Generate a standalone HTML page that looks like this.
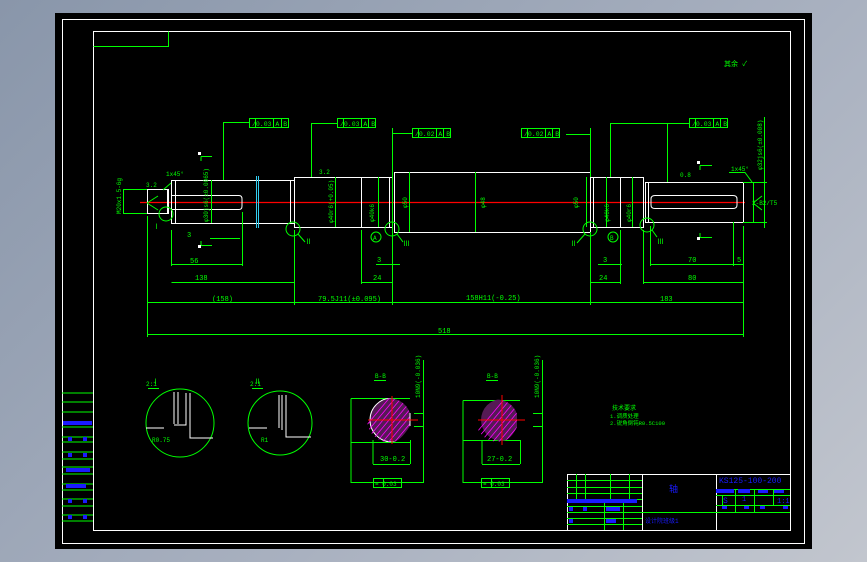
<!DOCTYPE html>
<html><head><meta charset="utf-8"><style>
html,body{margin:0;padding:0;}
body{width:867px;height:562px;background:linear-gradient(135deg,#8996aa 0%,#a9b1c0 60%,#c2c6ce 100%);overflow:hidden;position:relative;}
svg{position:absolute;left:0;top:0;}
text{font-family:"Liberation Mono","Noto Sans CJK SC",monospace;}
</style></head><body>
<svg width="867" height="562" viewBox="0 0 867 562" xmlns="http://www.w3.org/2000/svg">
<rect x="55" y="13" width="757" height="536" fill="#000"/>
<g fill="none" stroke="#fff" stroke-width="1">
<rect x="62.5" y="19.5" width="742" height="524"/>
<rect x="93.5" y="31.5" width="697" height="499"/>
</g>
<g fill="none" stroke="#00ff00" stroke-width="1">
<polyline points="93.5,46.5 168.5,46.5 168.5,31.5"/>
<!-- left strip lines -->
<path d="M62 393H93M62 402H93M62 412H93M62 427H93M62 437H93M62 442H93M62 452H93M62 459H93M62 467H93M62 474H93M62 484H93M62 490H93M62 499H93M62 506H93M62 515H93M62 521H93"/>
</g>
<g fill="#1a1aff">
<rect x="63" y="421" width="29" height="4"/><rect x="68" y="437" width="4" height="4"/><rect x="83" y="437" width="4" height="4"/>
<rect x="68" y="453" width="4" height="4"/><rect x="83" y="453" width="4" height="4"/>
<rect x="66" y="468" width="24" height="4"/><rect x="66" y="484" width="20" height="4"/>
<rect x="68" y="499" width="4" height="4"/><rect x="83" y="499" width="4" height="4"/>
<rect x="68" y="515" width="4" height="4"/><rect x="83" y="515" width="4" height="4"/>
</g>
<!-- centerline -->
<line x1="140" y1="202.5" x2="745" y2="202.5" stroke="#ff0000" stroke-width="1.2"/>
<!-- shaft -->
<g fill="none" stroke="#fff" stroke-width="1">
<rect x="147.5" y="189.5" width="21" height="24"/>
<line x1="167.5" y1="189.5" x2="167.5" y2="213.5"/>
<rect x="171.5" y="180.5" width="123" height="43"/>
<line x1="175.5" y1="180.5" x2="175.5" y2="223.5"/>
<path d="M171 195.5H239Q242 195.5 242 199V206Q242 209.5 239 209.5H171"/>
<line x1="290.5" y1="180.5" x2="290.5" y2="223.5"/>
<rect x="294.5" y="177.5" width="67" height="50"/>
<rect x="361.5" y="177.5" width="31" height="50"/>
<line x1="389.5" y1="177.5" x2="389.5" y2="227.5"/>
<rect x="394.5" y="172.5" width="196" height="60"/>
<rect x="590.5" y="177.5" width="53" height="50"/>
<line x1="593.5" y1="177.5" x2="593.5" y2="227.5"/>
<line x1="620.5" y1="177.5" x2="620.5" y2="227.5"/>
<rect x="645.5" y="182.5" width="98" height="40"/>
<line x1="648.5" y1="182.5" x2="648.5" y2="222.5"/>
<path d="M655 195.5H733Q737 195.5 737 199V205Q737 208.5 733 208.5H655Q651 208.5 651 205V199Q651 195.5 655 195.5Z"/>
</g>
<line x1="256.5" y1="176" x2="256.5" y2="228" stroke="#33ccee" stroke-width="1"/>
<line x1="258.5" y1="176" x2="258.5" y2="228" stroke="#33ccee" stroke-width="1"/>
<!-- green dims -->
<g fill="none" stroke="#00ff00" stroke-width="1">
<path d="M123.5 189V214M123.5 189.5H147M123.5 213.5H147"/>
<path d="M171.5 230V266M242.5 212V266M171 264.5H242"/>
<path d="M171.5 282.5H294M294.5 230V305M147.5 216V337M147 302.5H294"/>
<path d="M294 302.5H392M392.5 232V305M392 302.5H590M590.5 232V305M590 302.5H743M743.5 226V337M147 334.5H743"/>
<path d="M361.5 230V284M361 282.5H392"/>
<path d="M590 282.5H620M620.5 230V284"/>
<path d="M650.5 226V266M650 264.5H743M733.5 222V266"/>
<path d="M643.5 230V284M643 282.5H743"/>
<path d="M210 238.5H240M376 264.5H400M598 264.5H622"/>
<!-- vertical diam lines -->
<path d="M211.5 180V223M335.5 177V227M378.5 177V227M409.5 172V232M475.5 172V232M586.5 177V227M606.5 177V227M632.5 177V227M753.5 182V222"/>
<!-- GD&T leaders -->
<path d="M223.5 180V122.5H249"/>
<rect x="249.5" y="118.5" width="39" height="9"/>
<path d="M255.5 118.5V127.5M273.5 118.5V127.5M281.5 118.5V127.5"/>
<path d="M311.5 177V123.5H337"/>
<rect x="337.5" y="118.5" width="38" height="9"/>
<path d="M343.5 118.5V127.5M361.5 118.5V127.5M368.5 118.5V127.5"/>
<path d="M392.5 128V232M392 133.5H412"/>
<rect x="412.5" y="128.5" width="38" height="9"/>
<path d="M418.5 128.5V137.5M436.5 128.5V137.5M443.5 128.5V137.5"/>
<rect x="521.5" y="128.5" width="38" height="9"/>
<path d="M527.5 128.5V137.5M545.5 128.5V137.5M552.5 128.5V137.5"/>
<path d="M566 134.5H590M590.5 128V177"/>
<path d="M610.5 177V123.5H689M667.5 123.5V182"/>
<rect x="689.5" y="118.5" width="38" height="9"/>
<path d="M695.5 118.5V127.5M713.5 118.5V127.5M720.5 118.5V127.5"/>
<path d="M764.5 117V228M743 182.5H767M743 222.5H767M729 172.5H745L752 182"/>
<path d="M753 203L762 196M753 203L762 210"/>
<path d="M147 203L158 196M147 203L158 210M163 190L171 183"/>
<!-- detail circles on shaft -->
<circle cx="166" cy="214" r="7"/>
<circle cx="293" cy="229" r="7"/><path d="M298 234L305 242"/>
<circle cx="392" cy="229" r="7"/><path d="M397 234L403 242"/>
<circle cx="376" cy="237" r="5"/>
<circle cx="590" cy="229" r="7"/><path d="M585 234L577 243"/>
<circle cx="613" cy="237" r="5"/>
<circle cx="647" cy="225" r="7"/><path d="M652 230L657 237"/>
<!-- section symbols -->
<path d="M201 156.5H212M201 156.5V161M201 245.5H212M201 245.5V241M700 165.5H712M700 165.5V170M700 237.5H712M700 237.5V233"/>
<!-- detail views -->
<circle cx="180" cy="423" r="34"/>
<circle cx="280" cy="423" r="32"/>
<path d="M148 388.5H159M252 388.5H263M374 380.5H386M486 380.5H498"/>
<path d="M351 398.5H410M351 398.5V483M351 442.5H410M373 440V464M373 464.5H410M410.5 440V464M351 482.5H424M423.5 360V483M414 413.5H423M414 426.5H423"/>
<rect x="373.5" y="478.5" width="28" height="9"/><path d="M383.5 478.5V487.5"/>
<path d="M463 400.5H520M463 400.5V483M463 440.5H520M482 440V464M482 464.5H520M520.5 440V464M463 482.5H543M542.5 360V483M533 413.5H543M533 426.5H543"/>
<rect x="481.5" y="478.5" width="28" height="9"/><path d="M491.5 478.5V487.5"/>
</g>
<!-- detail white lines -->
<g fill="none" stroke="#fff" stroke-width="1">
<path d="M174 392V424M178 392V424M186 393V425H174M190 393V438H213M146 428H164"/>
<path d="M279 395V428M282 395V430M286 395V437H311M249 428H267"/>
</g>
<!-- sections -->
<clipPath id="c1"><path d="M410 413V426Q400 442 392 442A22 22 0 1 1 410 413Z"/></clipPath>
<circle cx="392" cy="420" r="22" fill="#551a55" stroke="#fff" clip-path="url(#c1)"/>
<g clip-path="url(#c1)" stroke="#ff00ff" stroke-width="0.8">
<path d="M370 450L420 390M376 450L426 390M364 450L414 390M358 450L408 390M352 450L402 390M382 450L432 390M388 450L438 390M394 450L444 390M346 450L396 390"/>
</g>
<path d="M410 413V426" stroke="#fff"/>
<clipPath id="c2"><path d="M517 414V427Q510 441 502 441A21 21 0 1 1 517 414Z"/></clipPath>
<circle cx="502" cy="420" r="21" fill="#551a55" clip-path="url(#c2)"/>
<g clip-path="url(#c2)" stroke="#ff00ff" stroke-width="0.8">
<path d="M480 450L530 390M486 450L536 390M474 450L524 390M468 450L518 390M462 450L512 390M492 450L542 390M498 450L548 390M504 450L554 390"/>
</g>
<g stroke="#ff0000"><path d="M368 420H418M392 396V444M478 420H525M502 395V445"/></g>
<!-- text -->
<g fill="#00ff00" font-size="7">
<text x="190" y="263">56</text><text x="195" y="280">138</text><text x="212" y="301">(158)</text>
<text x="318" y="301">79.5J11(±0.095)</text><text x="466" y="300">158H11(-0.25)</text>
<text x="660" y="301">183</text><text x="438" y="333">518</text>
<text x="373" y="280">24</text><text x="599" y="280">24</text><text x="688" y="262">70</text><text x="688" y="280">80</text>
<text x="377" y="262">3</text><text x="603" y="262">3</text><text x="737" y="262">5</text><text x="187" y="237">3</text>
<text x="252" y="126" font-size="6.5">/0.03 A B</text><text x="340" y="126" font-size="6.5">/0.03 A B</text>
<text x="415" y="136" font-size="6.5">/0.02 A B</text><text x="524" y="136" font-size="6.5">/0.02 A B</text>
<text x="692" y="126" font-size="6.5">/0.03 A B</text>
<text x="166" y="176" font-size="6">1x45°</text><text x="731" y="171" font-size="6">1x45°</text>
<text x="752" y="205" font-size="6">2-B2/T5</text>
<text x="146" y="187" font-size="6">3.2</text><text x="319" y="174" font-size="6">3.2</text><text x="680" y="177" font-size="6">0.8</text>
<text x="724" y="66" font-size="7">其余 ✓</text>
<text x="152" y="384">Ⅰ</text><text x="146" y="386" font-size="6">2:1</text>
<text x="254" y="384">Ⅱ</text><text x="250" y="386" font-size="6">2:1</text>
<text x="375" y="378" font-size="6">B-B</text><text x="487" y="378" font-size="6">B-B</text>
<text x="152" y="442" font-size="6">R0.75</text><text x="261" y="442" font-size="6">R1</text>
<text x="380" y="461">30-0.2</text><text x="487" y="461">27-0.2</text>
<text x="375" y="486" font-size="6">= 0.03</text><text x="483" y="486" font-size="6">= 0.03</text>
<text x="612" y="410" font-size="6">技术要求</text><text x="610" y="418" font-size="5.5">1.调质处理</text><text x="610" y="425" font-size="5.5">2.锐角倒钝R0.5C100</text>
<text x="305" y="244">Ⅱ</text><text x="403" y="246">Ⅲ</text><text x="570" y="246">Ⅱ</text><text x="657" y="244">Ⅲ</text><text x="153" y="229">Ⅰ</text>
<text x="373" y="240" font-size="6">A</text><text x="610" y="240" font-size="6">B</text>
<g font-size="6">
<text transform="translate(121,214) rotate(-90)">M20x1.5-6g</text>
<text transform="translate(208,222) rotate(-90)">φ30js6(±0.0065)</text>
<text transform="translate(333,223) rotate(-90)">φ40r6(+0.05)</text>
<text transform="translate(374,222) rotate(-90)">φ40k6</text>
<text transform="translate(407,208) rotate(-90)">φ50</text>
<text transform="translate(485,208) rotate(-90)">φ48</text>
<text transform="translate(578,208) rotate(-90)">φ50</text>
<text transform="translate(609,222) rotate(-90)">φ40k6</text>
<text transform="translate(631,222) rotate(-90)">φ40r6</text>
<text transform="translate(762,170) rotate(-90)">φ32js6(±0.008)</text>
<text transform="translate(420,398) rotate(-90)">10N9(-0.036)</text>
<text transform="translate(539,398) rotate(-90)">10N9(-0.036)</text>
</g>
</g>
<g fill="#fff"><rect x="198" y="152" width="3" height="3"/><rect x="198" y="245" width="3" height="3"/><rect x="697" y="161" width="3" height="3"/><rect x="697" y="237" width="3" height="3"/></g>
<!-- title block -->
<g fill="none" stroke="#fff" stroke-width="1"><path d="M567.5 530V474.5H790M642.5 474V530M716.5 474V530"/></g>
<g fill="none" stroke="#00ff00" stroke-width="1">
<path d="M567 480.5H642M567 487.5H642M567 493.5H642M567 499.5H642M567 506.5H642M567 518.5H642M567 524.5H642M567 512.5H790"/>
<path d="M576.5 474V499M585.5 474V499M610.5 474V499M629.5 474V499M604.5 499V530M623.5 499V530"/>
<path d="M716 489.5H790M716 495.5H790M716 505.5H790M735.5 489V512M754.5 489V512M773.5 489V505M722.5 495V505"/>
</g>
<g fill="#1a1aff">
<text x="669" y="492" font-size="9" font-family="Noto Sans CJK SC,sans-serif">轴</text>
<text x="719" y="483" font-size="8">KS125-100-200</text>
<text x="723" y="503" font-size="8">S</text><text x="742" y="501" font-size="7">1</text><text x="777" y="503" font-size="7">1:1</text>
<text x="645" y="523" font-size="6">设计院班级1</text>
<rect x="567" y="499" width="70" height="4"/><rect x="716" y="489" width="18" height="4"/><rect x="738" y="489" width="12" height="4"/><rect x="758" y="490" width="10" height="3"/><rect x="774" y="490" width="10" height="3"/>
<rect x="569" y="507" width="4" height="4"/><rect x="583" y="507" width="4" height="4"/><rect x="606" y="507" width="14" height="4"/>
<rect x="569" y="519" width="4" height="4"/><rect x="606" y="519" width="10" height="4"/>
<rect x="722" y="506" width="5" height="3"/><rect x="744" y="506" width="5" height="3"/><rect x="760" y="506" width="5" height="3"/><rect x="783" y="506" width="5" height="3"/>
</g>
</svg>
</body></html>
